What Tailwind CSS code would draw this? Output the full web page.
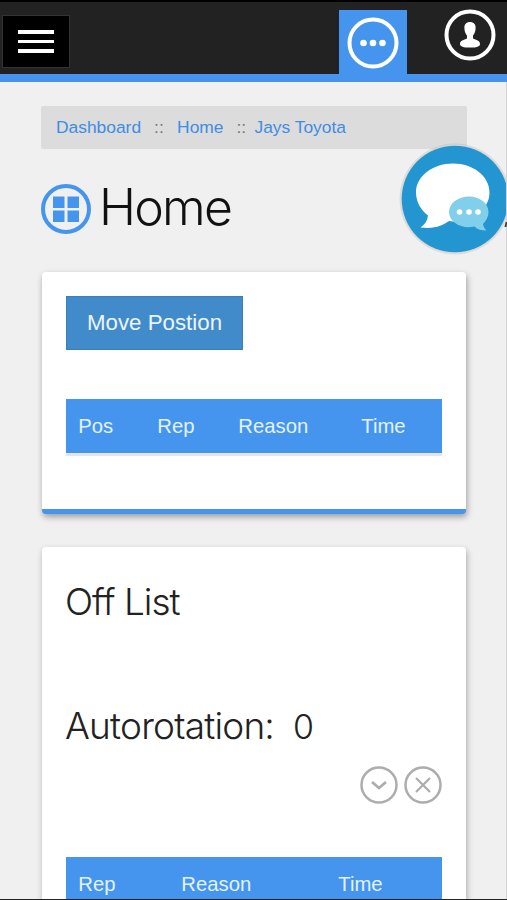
<!DOCTYPE html>
<html lang="en">
<head>
  <meta charset="UTF-8">
  <meta name="viewport" content="width=device-width, initial-scale=1.0">
  <title>Home - Jays Toyota</title>
  <script src="https://cdn.jsdelivr.net/npm/@tailwindcss/browser@4"></script>
</head>
<body class="relative h-[900px] overflow-hidden bg-[#f0f0f0] font-['Liberation_Sans',Arial,sans-serif] text-[#222]">

  <!-- Top Bar -->
  <header class="flex h-[82px] items-start border-t-2 border-b-8 border-t-black border-b-[#4595ef] bg-[#222]">
    <button class="mt-[13px] ml-[2px] flex h-[53px] w-[68px] flex-col items-center justify-center gap-[6px] border border-[#333] bg-black" aria-label="Menu">
      <span class="h-[3.5px] w-9 bg-white"></span>
      <span class="h-[3.5px] w-9 bg-white"></span>
      <span class="h-[3.5px] w-9 bg-white"></span>
    </button>
    <button class="mt-[8px] ml-auto flex h-[64px] w-[68px] justify-center bg-[#4595ef] pt-[7px]" aria-label="More">
      <svg width="52" height="52" viewBox="0 0 52 52" fill="white">
        <circle cx="26" cy="26" r="23.5" fill="none" stroke="white" stroke-width="4"/>
        <circle cx="16.5" cy="26" r="3.3"/>
        <circle cx="26" cy="26" r="3.3"/>
        <circle cx="35.5" cy="26" r="3.3"/>
      </svg>
    </button>
    <button class="mt-[7px] mr-[11px] ml-[37px]" aria-label="Account">
      <svg width="52" height="52" viewBox="0 0 52 52" fill="white">
        <circle cx="26" cy="26" r="23.5" fill="none" stroke="white" stroke-width="4"/>
        <path d="M26 13c-3.800 0-5.800 2.500-5.600 6 0 3.500 1.300 6 2.600 7.500v3c-3 1.500-7 1.900-7 5.500 0 2.600 3.500 3.600 10 3.600s10-1 10-3.600c0-3.600-4-4-7-5.500v-3c1.300-1.500 2.600-4 2.600-7.500.2-3.500-1.800-6-5.600-6z"/>
      </svg>
    </button>
  </header>

  <main class="pt-6 pr-10 pl-[41px]">
    <!-- Breadcrumb -->
    <nav class="flex h-[43px] items-center rounded-xs bg-[#dcdcdc] pl-[15px] text-[17.400px] whitespace-pre text-[#3f8ce5]">
      <a href="#">Dashboard</a><span class="ml-[13px] w-[23px] text-[#777]">::</span><a href="#">Home</a><span class="ml-[13px] w-[18px] text-[#777]">::</span><a href="#">Jays Toyota</a>
    </nav>

    <!-- Page Title -->
    <div class="mt-[34px] flex h-[51px] items-center">
      <svg width="50" height="50" viewBox="0 0 50 50" fill="#4595ef">
        <circle cx="25" cy="25" r="23" fill="none" stroke="#4595ef" stroke-width="4"/>
        <path d="M12 12.500h11.500V24H12zM26.500 12.500H38V24H26.500zM12 26.500h11.500V38H12zM26.500 26.500H38V38H26.500z"/>
      </svg>
      <h1 class="-mt-[4px] ml-[8px] font-[Inter,sans-serif] text-[50px] leading-none font-light tracking-[-1.8px] text-[#111]">Home</h1>
    </div>

    <!-- Position List -->
    <section class="mt-[38px] mr-px ml-px h-[242px] rounded-sm border-b-[5px] border-[#4595ef] bg-white px-6 pt-6 shadow-[1px_3px_6px_rgba(0,0,0,0.35)]">
      <button class="h-[54px] w-[177px] border border-[#367fc0] bg-[#428bca] text-[22.300px] text-[#eaf5ff]">Move Postion</button>
      <div class="mt-[49px] grid h-[54px] grid-cols-[79px_81px_123px_1fr] items-center bg-[#4595ef] pl-[12.300px] text-[20.300px] text-[#e4f2ff] shadow-[0_3px_1px_rgba(0,0,0,0.1)]">
        <span>Pos</span>
        <span>Rep</span>
        <span>Reason</span>
        <span>Time</span>
      </div>
    </section>

    <!-- Off List -->
    <section class="mt-[33px] mr-px ml-px h-[353px] overflow-hidden rounded-t-sm bg-white px-6 pt-[33px] shadow-[1px_3px_6px_rgba(0,0,0,0.3)]">
      <h2 class="-ml-px font-[Inter,sans-serif] text-[37px] leading-[44px] font-light tracking-[-1px]">Off List</h2>
      <div class="mt-[80px] flex items-baseline whitespace-nowrap">
        <h2 class="-ml-px w-[228px] font-[Inter,sans-serif] text-[37px] leading-[44px] font-light tracking-[-0.8px]">Autorotation:</h2>
        <span class="font-[Inter,sans-serif] text-[34px] leading-[44px] font-light">0</span>
      </div>
      <div class="mt-[17px] flex justify-end gap-[6px]">
        <svg width="38" height="38" viewBox="0 0 38 38" fill="none" stroke="#adadad" stroke-width="2.500">
          <circle cx="19" cy="19" r="17.500"/>
          <path d="M12 16l7 6 7-6" stroke-width="2.800"/>
        </svg>
        <svg width="38" height="38" viewBox="0 0 38 38" fill="none" stroke="#adadad" stroke-width="2.500">
          <circle cx="19" cy="19" r="17.500"/>
          <path d="M12 12l14 14M26 12L12 26" stroke-width="2.200"/>
        </svg>
      </div>
      <div class="mt-[53px] grid h-[54px] grid-cols-[103px_157px_1fr] items-center bg-[#4595ef] pt-px pl-[12.300px] text-[20.300px] text-[#e4f2ff]">
        <span>Rep</span>
        <span>Reason</span>
        <span>Time</span>
      </div>
    </section>
  </main>

  <!-- Chat bubble floats over the page -->
  <button class="absolute top-[140px] left-[397px]" aria-label="Chat">
    <svg width="110" height="118" viewBox="0 0 110 118">
      <circle cx="58" cy="59" r="55.500" fill="#000" opacity=".08"/>
      <circle cx="58" cy="59" r="54.500" fill="#ddd9d4"/>
      <circle cx="58" cy="59" r="53.300" fill="#2396d1"/>
      <path d="M56 23.500c20.500 0 36.500 12.800 36.500 29S76.500 81.500 56 81.500l-4-.5c-6 4-14 8.500-28.500 6.500 4.500-3 7-7 7.500-12C23.500 69.500 19 61.500 19 52.500c0-16.200 16.500-29 37-29z" fill="white"/>
      <path d="M72 56.500c11 0 19.500 7 19.500 15.500 0 5-2.500 9-5.500 12 .3 2.500 1.500 4.500 3.500 6.500-5 0-9-1-12-4l-5.500.7c-11 0-20-6.700-20-15.200s9-15.500 20-15.500z" fill="#82cfeb"/>
      <circle cx="62.500" cy="72" r="2.800" fill="white"/>
      <circle cx="72" cy="72" r="2.800" fill="white"/>
      <circle cx="81" cy="72" r="2.800" fill="white"/>
    </svg>
  </button>
  <div class="absolute top-[82px] right-0 bottom-0 w-px bg-[#d4d4d4]"></div>
  <div class="absolute top-[222px] right-0 h-[5px] w-[2px] -skew-x-12 bg-[#444]"></div>
  <div class="absolute right-0 bottom-0 left-0 h-px bg-[#222]"></div>

</body>
</html>
